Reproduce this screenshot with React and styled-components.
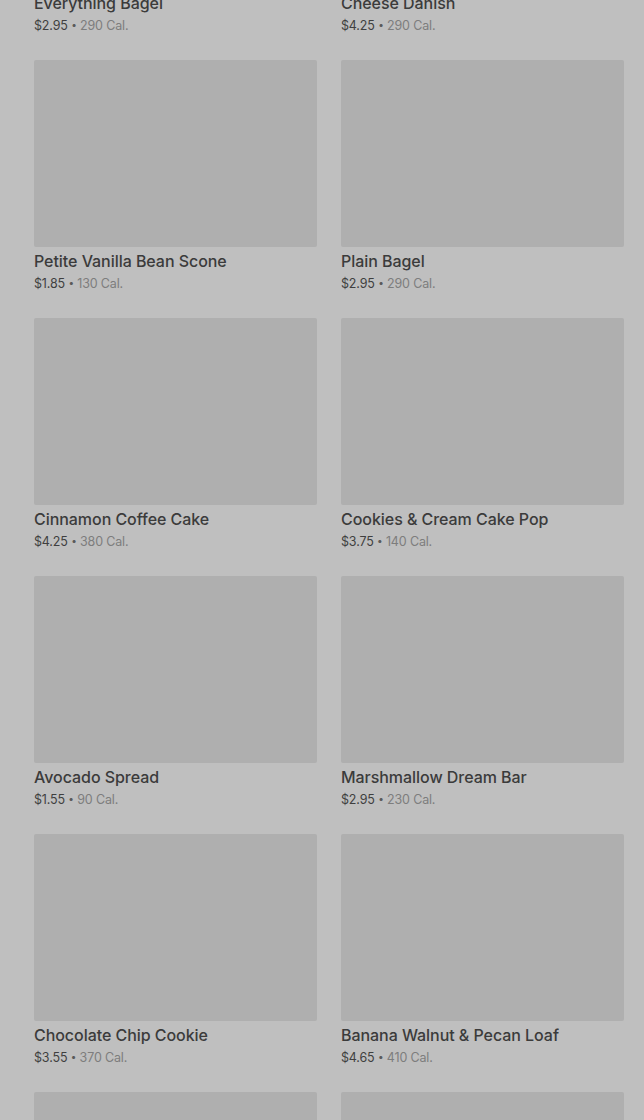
import React from 'react';
import styled, { createGlobalStyle } from 'styled-components';

const GlobalStyle = createGlobalStyle`
  html, body {
    margin: 0;
    padding: 0;
    background: #bfbfbf;
    overflow: hidden;
  }
  body {
    font-family: Inter, "Noto Sans", "Liberation Sans", sans-serif;
  }
`;

const Page = styled.div`
  height: 1120px;
  overflow: hidden;
  background: #bfbfbf;
`;

const Grid = styled.div`
  display: grid;
  grid-template-columns: 283px 283px;
  column-gap: 24px;
  row-gap: 24px;
  margin-top: -198px;
  padding: 0 20px 0 34px;
`;

const Card = styled.div`
  display: flex;
  flex-direction: column;
`;

const Thumb = styled.div`
  height: 187px;
  background: #afafaf;
  border-radius: 2px;
`;

const Title = styled.div`
  margin-top: 3px;
  font-size: 16px;
  line-height: 22px;
  font-weight: 500;
  color: #3b3b3b;
  letter-spacing: -0.05px;
`;

const Meta = styled.div`
  margin-top: 2px;
  height: 20px;
  font-size: 12.5px;
  line-height: 20px;
  color: #3f3f3f;
  letter-spacing: -0.15px;
`;

const Cal = styled.span`
  color: #7d7d7d;
`;

const Dot = styled.span`
  color: #5a5a5a;
  font-size: 10px;
  line-height: 0;
  vertical-align: 2px;
`;

const items = [
  { name: 'Everything Bagel', price: '$2.95', cal: 290 },
  { name: 'Cheese Danish', price: '$4.25', cal: 290 },
  { name: 'Petite Vanilla Bean Scone', price: '$1.85', cal: 130 },
  { name: 'Plain Bagel', price: '$2.95', cal: 290 },
  { name: 'Cinnamon Coffee Cake', price: '$4.25', cal: 380 },
  { name: 'Cookies & Cream Cake Pop', price: '$3.75', cal: 140 },
  { name: 'Avocado Spread', price: '$1.55', cal: 90 },
  { name: 'Marshmallow Dream Bar', price: '$2.95', cal: 230 },
  { name: 'Chocolate Chip Cookie', price: '$3.55', cal: 370 },
  { name: 'Banana Walnut & Pecan Loaf', price: '$4.65', cal: 410 },
  { id: 'next-1' },
  { id: 'next-2' },
];

export default function App() {
  return (
    <Page>
      <GlobalStyle />
      <Grid>
        {items.map((item) => (
          <Card key={item.name || item.id}>
            <Thumb />
            {item.name && (
              <>
                <Title>{item.name}</Title>
                <Meta>
                  {item.price} <Dot>•</Dot> <Cal>{item.cal} Cal.</Cal>
                </Meta>
              </>
            )}
          </Card>
        ))}
      </Grid>
    </Page>
  );
}
